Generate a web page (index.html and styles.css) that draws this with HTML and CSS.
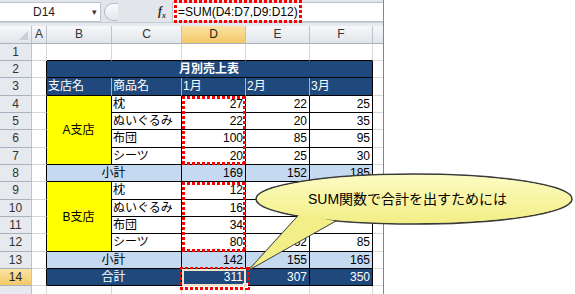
FILE: index.html
```html
<!DOCTYPE html>
<html>
<head>
  <meta charset="UTF-8">
  <title>月別売上表</title>
  <link rel="stylesheet" href="styles.css">
</head>
<body>
  <div id="page">
    <div id="excel">
      <div id="formula-bar">
        <div id="name-box">
          <span class="cell-ref">D14</span>
          <span class="drop">&#9662;</span>
        </div>
        <div id="fx-area">
          <span class="pill"></span>
          <span class="fx">f<sub>x</sub></span>
        </div>
        <div id="formula">
          <span class="formula-text marquee">=SUM(D4:D7,D9:D12)</span>
        </div>
      </div>

      <div id="sheet">
        <div class="grid">
          <!-- column headers -->
          <div class="corner"><span class="tri"></span></div>
          <div class="h">A</div>
          <div class="h">B</div>
          <div class="h">C</div>
          <div class="h sel">D</div>
          <div class="h">E</div>
          <div class="h">F</div>
          <div class="h"></div>

          <!-- row 1 -->
          <div class="r">1</div>
          <div class="c"></div>
          <div class="c above"></div>
          <div class="c above"></div>
          <div class="c above"></div>
          <div class="c above"></div>
          <div class="c above"></div>
          <div class="c"></div>

          <!-- row 2 -->
          <div class="r">2</div>
          <div class="c before"></div>
          <div class="t navy title">月別売上表</div>
          <div class="c"></div>

          <!-- row 3 -->
          <div class="r">3</div>
          <div class="c before"></div>
          <div class="t navy head">支店名</div>
          <div class="t navy head">商品名</div>
          <div class="t navy head">1月</div>
          <div class="t navy head">2月</div>
          <div class="t navy head last">3月</div>
          <div class="c"></div>

          <!-- A branch -->
          <div class="r">4</div>
          <div class="c before"></div>
          <div class="t yellow branch">A支店</div>
          <div class="t">枕</div>
          <div class="t num">27</div>
          <div class="t num">22</div>
          <div class="t num">25</div>
          <div class="c"></div>

          <div class="r">5</div>
          <div class="c before"></div>
          <div class="t">ぬいぐるみ</div>
          <div class="t num">22</div>
          <div class="t num">20</div>
          <div class="t num">35</div>
          <div class="c"></div>

          <div class="r">6</div>
          <div class="c before"></div>
          <div class="t">布団</div>
          <div class="t num">100</div>
          <div class="t num">85</div>
          <div class="t num">95</div>
          <div class="c"></div>

          <div class="r">7</div>
          <div class="c before"></div>
          <div class="t">シーツ</div>
          <div class="t num">20</div>
          <div class="t num">25</div>
          <div class="t num">30</div>
          <div class="c"></div>

          <div class="r">8</div>
          <div class="c before"></div>
          <div class="t blue sub">小計</div>
          <div class="t blue num">169</div>
          <div class="t blue num">152</div>
          <div class="t blue num">185</div>
          <div class="c"></div>

          <!-- B branch (E9:F11 lie under the callout) -->
          <div class="r">9</div>
          <div class="c before"></div>
          <div class="t yellow branch">B支店</div>
          <div class="t">枕</div>
          <div class="t num">12</div>
          <div class="t num"></div>
          <div class="t num"></div>
          <div class="c"></div>

          <div class="r">10</div>
          <div class="c before"></div>
          <div class="t">ぬいぐるみ</div>
          <div class="t num">16</div>
          <div class="t num"></div>
          <div class="t num"></div>
          <div class="c"></div>

          <div class="r">11</div>
          <div class="c before"></div>
          <div class="t">布団</div>
          <div class="t num">34</div>
          <div class="t num">38</div>
          <div class="t num"></div>
          <div class="c"></div>

          <div class="r">12</div>
          <div class="c before"></div>
          <div class="t">シーツ</div>
          <div class="t num">80</div>
          <div class="t num">62</div>
          <div class="t num">85</div>
          <div class="c"></div>

          <div class="r">13</div>
          <div class="c before"></div>
          <div class="t blue sub">小計</div>
          <div class="t blue num">142</div>
          <div class="t blue num">155</div>
          <div class="t blue num">165</div>
          <div class="c"></div>

          <div class="r sel">14</div>
          <div class="c before"></div>
          <div class="t navy sub">合計</div>
          <div class="t navy num">311</div>
          <div class="t navy num">307</div>
          <div class="t navy num">350</div>
          <div class="c"></div>

          <div class="r"></div>
          <div class="c"></div>
          <div class="c"></div>
          <div class="c"></div>
          <div class="c"></div>
          <div class="c"></div>
          <div class="c"></div>
          <div class="c"></div>
        </div>

        <!-- annotation layer, same tracks as the grid -->
        <div class="grid marks">
          <div class="marquee range-a"></div>
          <div class="marquee range-b"></div>
          <div class="active"><span class="handle"></span></div>
          <div class="marquee total"></div>
        </div>
      </div>
    </div>

    <svg id="callout" width="575" height="294" viewBox="0 0 575 294">
      <defs>
        <linearGradient id="balloon" x1="0" y1="0" x2="0" y2="1">
          <stop offset="0" stop-color="#fdfcc2"/>
          <stop offset="1" stop-color="#f2ee86"/>
        </linearGradient>
      </defs>
      <polygon points="300,214 250,269 335,221" fill="url(#balloon)" stroke="#3a3a3a" stroke-width="1.6"/>
      <ellipse cx="414" cy="199" rx="158" ry="25" fill="url(#balloon)" stroke="#3a3a3a" stroke-width="1.6"/>
      <polygon points="300,214 250,269 335,221" fill="#f2ee88"/>
      <ellipse cx="414" cy="199" rx="157" ry="24" fill="url(#balloon)"/>
      <text x="308" y="204" class="balloon-text">SUM関数で合計を出すためには</text>
    </svg>
  </div>
</body>
</html>
```

FILE: styles.css
```css
* {
  box-sizing: border-box;
}
body {
  margin: 0;
  background: #fff;
  font-family: "Liberation Sans", "Noto Sans CJK JP", sans-serif;
  font-size: 12px;
  color: #000;
}
#page {
  position: relative;
  width: 575px;
  height: 294px;
  overflow: hidden;
}
#excel {
  width: 384px;
  height: 294px;
  background: #e6eaee;
  border-right: 1px solid #7f8790;
  overflow: hidden;
}

/* formula bar */
#formula-bar {
  display: flex;
  height: 23px;
  padding-top: 2px;
  background: #e2e6eb;
  border-bottom: 1px solid #c6ccd3;
}
#name-box {
  display: flex;
  align-items: center;
  width: 101px;
  padding-left: 33px;
  background: #fff;
  border: 1px solid #bcc3cb;
  border-left: none;
  color: #1e1e1e;
  font-size: 12px;
}
#name-box .drop {
  margin-left: auto;
  margin-right: 3px;
  font-size: 9px;
  color: #333;
}
#fx-area {
  display: flex;
  align-items: center;
  width: 71px;
  padding-left: 3px;
}
#fx-area .pill {
  width: 14px;
  height: 18px;
  border: 1px solid #b5bcc4;
  border-right: none;
  border-radius: 9px 0 0 9px;
  background: linear-gradient(#fafbfc, #e3e7eb);
}
#fx-area .fx {
  margin-left: auto;
  margin-right: 6px;
  font-family: "Liberation Serif", serif;
  font-style: italic;
  font-weight: bold;
  font-size: 12px;
  color: #333;
}
#fx-area .fx sub {
  font-size: 8px;
}
#formula {
  flex: 1;
  background: #fff;
  border: 1px solid #bcc3cb;
  border-right: none;
}
.formula-text {
  display: inline-block;
  height: 23px;
  margin: -3px 0 0 1px;
  padding: 4px 4px 0 4px;
  font-size: 12px;
  line-height: 16px;
}

/* dotted red annotation */
.marquee {
  background:
    repeating-linear-gradient(90deg, #f00 0 3px, transparent 3px 5px) top / 100% 3px no-repeat,
    repeating-linear-gradient(90deg, #f00 0 3px, transparent 3px 5px) bottom / 100% 3px no-repeat,
    repeating-linear-gradient(180deg, #f00 0 3px, transparent 3px 5px) left / 3px 100% no-repeat,
    repeating-linear-gradient(180deg, #f00 0 3px, transparent 3px 5px) right / 3px 100% no-repeat;
}

/* sheet grid */
#sheet {
  position: relative;
  margin-top: 3px;
}
.grid {
  display: grid;
  grid-template-columns: 32px 15px 65px 70px 64px 64px 63px 11px;
  grid-template-rows: 18px 17px 17px 18px 17px 17px 18px 17px 17px 18px 17px 17px 18px 17px 17px 10px;
}
.grid > div {
  border-right: 1px solid #d8d8d8;
  border-bottom: 1px solid #d8d8d8;
  white-space: nowrap;
  overflow: hidden;
  line-height: 16px;
}
.c {
  background: #fff;
}
.c.above {
  border-bottom-color: #000;
}
.c.before {
  border-right-color: #000;
}
.corner,
.h,
.r {
  background: linear-gradient(#f6f7f9, #e1e5ea);
  color: #333;
  text-align: center;
  font-size: 12px;
}
.grid > .corner,
.grid > .h,
.grid > .r {
  border-right-color: #bcc3cc;
  border-bottom-color: #a9b1bb;
}
.h {
  line-height: 17px;
}
.r {
  background: #e6e9ed;
}
.h.sel,
.r.sel {
  background: linear-gradient(#fbe4a4, #f2c867);
  color: #222;
}
.corner {
  position: relative;
}
.corner .tri {
  position: absolute;
  right: 3px;
  bottom: 3px;
  border-left: 9px solid transparent;
  border-bottom: 9px solid #c9ced5;
}

/* table cells */
.grid > .t {
  border-right-color: #000;
  border-bottom-color: #000;
  background: #fff;
  padding: 0 2px 0 1px;
  font-size: 12px;
}
.num {
  text-align: right;
}
.navy {
  background: #1f497d;
  color: #fff;
}
.grid > .navy.head {
  border-right-color: #9fb3cc;
}
.grid > .navy.head.last {
  border-right-color: #000;
}
.title {
  grid-column: span 5;
  text-align: center;
  font-weight: bold;
  font-size: 13px;
}
.grid > .yellow {
  background: #ffff00;
}
.branch {
  grid-row: span 4;
  display: flex;
  align-items: center;
  justify-content: center;
}
.grid > .blue {
  background: #c5d9f1;
}
.grid > .navy {
  background: #1f497d;
}
.sub {
  grid-column: span 2;
  text-align: center;
}

/* annotation layer */
.marks {
  position: absolute;
  inset: 0;
  pointer-events: none;
}
.grid.marks > div {
  border: none;
  overflow: visible;
}
.range-a {
  grid-column: 5;
  grid-row: 5 / 9;
}
.range-b {
  grid-column: 5;
  grid-row: 10 / 14;
}
.total {
  grid-column: 5;
  grid-row: 15;
  margin: -2px -4px -4px -2px;
}
.grid.marks > .active {
  grid-column: 5;
  grid-row: 15;
  position: relative;
  border: 2px solid #efe2c8;
}
.active .handle {
  position: absolute;
  right: -4px;
  bottom: -4px;
  width: 5px;
  height: 5px;
  background: #efe2c8;
  border: 1px solid #fff;
}

/* callout */
#callout {
  position: absolute;
  left: 0;
  top: 0;
  pointer-events: none;
}
.balloon-text {
  font-family: "Liberation Sans", "Noto Sans CJK JP", sans-serif;
  font-size: 14px;
  fill: #000;
}
```
